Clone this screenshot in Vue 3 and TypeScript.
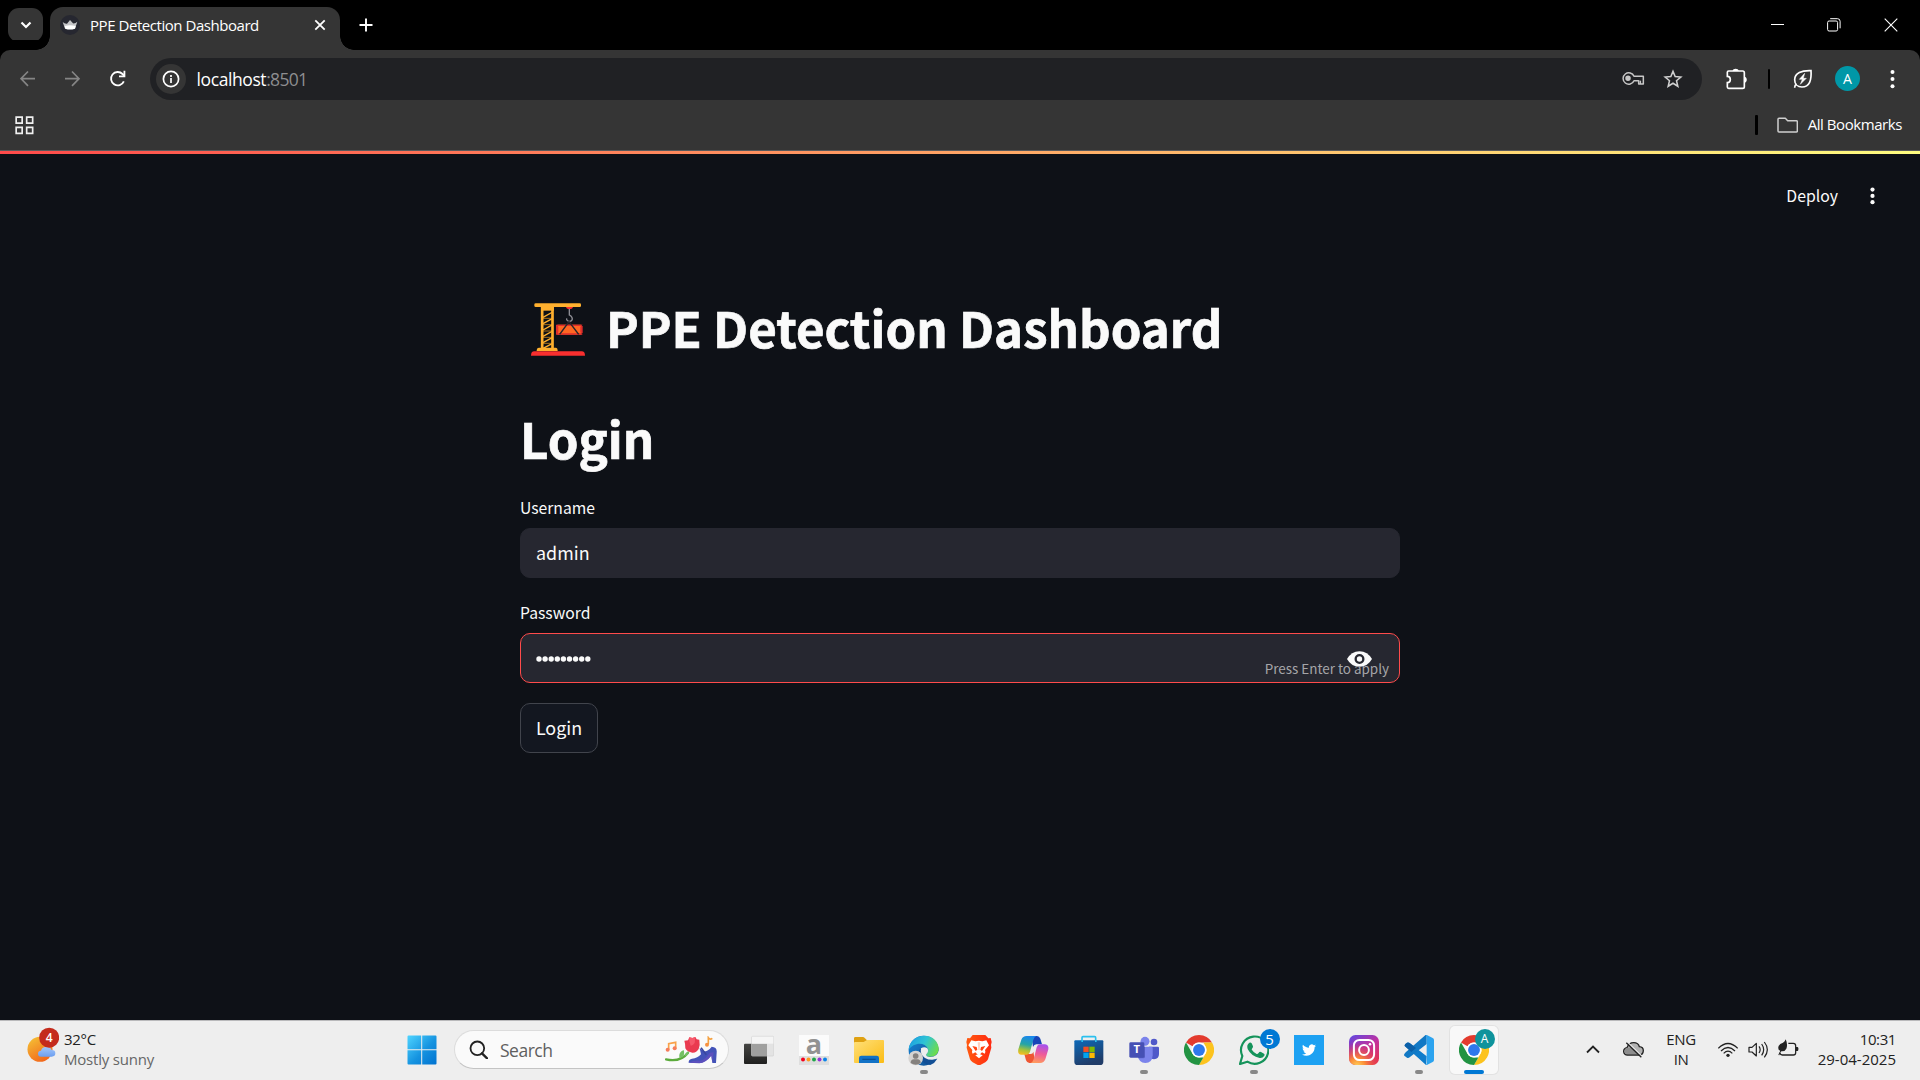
<script setup lang="ts">
interface App { id: string; running?: boolean; active?: boolean }

const apps: App[] = [
  { id: 'taskview' },
  { id: 'amazon' },
  { id: 'files' },
  { id: 'edge', running: true },
  { id: 'brave' },
  { id: 'copilot' },
  { id: 'store' },
  { id: 'teams', running: true },
  { id: 'chrome' },
  { id: 'whatsapp', running: true },
  { id: 'twitter' },
  { id: 'instagram' },
  { id: 'vscode', running: true },
  { id: 'chrome-profile', active: true },
]

const swatches = ['#f5001d', '#ff9a1f', '#1fa54a', '#9333d6', '#0a84e8']
</script>

<template>
  <div class="screen">
    <header class="tabstrip">
      <div class="tab-search">
        <svg width="12" height="8" viewBox="0 0 12 8"><path d="M1.500 1.500 6 6l4.500-4.500" fill="none" stroke="#fff" stroke-width="2.200" /></svg>
      </div>
      <div class="tab">
        <svg class="favicon" width="20" height="20" viewBox="180 45 60 60">
          <circle cx="210" cy="75" r="30" fill="#262730" />
          <path d="M188 66q6 6 13 5l9-11 9 10q7 1 13-5l-5 15q-1 5-4 7-13 3-26 0-3-2-4-7z" fill="#c4c5c8" />
          <path d="M194 78q16-4 33 0l-2 8q-15 3-29 0z" fill="#fff" />
        </svg>
        <span class="tab-title">PPE Detection Dashboard</span>
        <svg class="tab-close" width="12" height="12" viewBox="0 0 12 12"><path d="M1.300 1.300l9.400 9.400M10.700 1.300l-9.400 9.400" stroke="#fff" stroke-width="1.800" /></svg>
      </div>
      <svg class="plus" width="14" height="14" viewBox="0 0 14 14"><path d="M7 .5v13M.5 7h13" stroke="#fff" stroke-width="1.900" /></svg>
      <div class="window-controls">
        <svg width="13" height="14" viewBox="0 0 13 14"><path d="M0 6.500h13" stroke="#fff" stroke-width="1" /></svg>
        <svg width="14" height="14" viewBox="0 0 14 14" fill="none" stroke="#fff"><rect x=".6" y="3" width="10" height="10" rx="1.500" /><path d="M3.200 .7h7.300q2.600 0 2.600 2.600v7" /></svg>
        <svg width="14" height="14" viewBox="0 0 14 14"><path d="M.7 .7l12.600 12.600M13.300 .7L.7 13.300" stroke="#fff" stroke-width="1.100" /></svg>
      </div>
    </header>

    <div class="toolbar">
      <svg class="nav" width="65" height="20" viewBox="60 207 195 60" fill="none" stroke="#858585" stroke-width="5">
        <path d="M105 236H64M84 214.500L63 236l21 21.500" />
        <path d="M195 236h41M216 214.500L237 236l-21 21.500" />
      </svg>
      <svg class="reload" width="18" height="18" viewBox="327 209 54 54">
        <path d="M371.500 243a20 20 0 1 1-4-22l6 6" fill="none" stroke="#fff" stroke-width="5.500" />
        <path d="M376 211v20h-19v-5.500h13.500V211z" fill="#fff" />
      </svg>
      <div class="omnibox">
        <div class="site-info">
          <svg width="18" height="18" viewBox="0 0 18 18"><circle cx="9" cy="9" r="7.600" fill="none" stroke="#fff" stroke-width="1.700" /><path d="M9 8v5M9 5v1.900" stroke="#fff" stroke-width="1.700" /></svg>
        </div>
        <span class="url"><span class="host">localhost</span><span class="port">:8501</span></span>
        <svg class="key" width="24" height="15" viewBox="182 217 72 45" fill="none" stroke="#c7c7c7" stroke-width="4.500">
          <path d="M249 233h-28a17 17 0 1 0 0 13h9v0h5v10h14z" stroke-linejoin="round" />
          <circle cx="203" cy="239" r="6" fill="#c7c7c7" />
          <path d="M240 246v10" />
        </svg>
        <svg width="20" height="20" viewBox="307 209 60 60" fill="none" stroke="#d0d0d0" stroke-width="4.600">
          <path d="M337 216l6.500 15.500 17 1.500-13 11 4 16.800-14.500-9-14.500 9 4-16.800-13-11 17-1.500z" />
        </svg>
      </div>
      <svg class="puzzle" width="22" height="22" viewBox="497 203 66 66">
        <path d="M505 212h42q5 0 5 5v42q0 5-5 5h-42q-4 0-4-4v-13c12 0 12-19 0-19v-12q0-4 4-4z" fill="none" stroke="#fff" stroke-width="5" />
        <path d="M517 212c0-9 18-9 18 0zM552 229c10 1 10 17 0 18z" fill="#fff" />
      </svg>
      <i class="divider"></i>
      <svg class="leaf" width="20" height="20" viewBox="698 206 60 60" fill="none" stroke="#fff">
        <path d="M752 211c-28-1-49 6-49 27 0 13 9 22 22 22 23 0 29-21 27-49zM703 262c0-6 1-9 6-12" stroke-width="5" />
        <path d="M733 219l-16 18h9l-6 15 18-18h-9z" fill="#fff" stroke="#fff" stroke-width="1.500" />
      </svg>
      <div class="avatar">A</div>
      <svg class="more" width="5" height="20" viewBox="0 0 5 20" fill="#fff"><circle cx="2.500" cy="3" r="2" /><circle cx="2.500" cy="10" r="2" /><circle cx="2.500" cy="17.300" r="2" /></svg>
    </div>

    <div class="bookmarks">
      <svg class="grid" width="19" height="19" viewBox="46 347 57 57" fill="none" stroke="#f0f0f0" stroke-width="5">
        <path d="M49.500 350.500h18v18h-18zM81 350.500h18v18H81zM49.500 381h18v18h-18zM81 381h18v18H81z" />
      </svg>
      <i class="divider wide"></i>
      <svg class="folder" width="21" height="16" viewBox="651 352 63 48" fill="none" stroke="#cfcfcf" stroke-width="4.500" stroke-linejoin="round"><path d="M654 359q0-3 3-3h19l7 7h26q3 0 3 3v28q0 3-3 3h-52q-3 0-3-3z" /></svg>
      <span class="all">All Bookmarks</span>
    </div>

    <main class="page">
      <div class="page-edge"></div>
      <div class="decoration"></div>
      <div class="app-bar">
        <span class="deploy">Deploy</span>
        <svg width="5" height="18" viewBox="0 0 5 18" fill="#fafafa"><circle cx="2.500" cy="2.600" r="2.100" /><circle cx="2.500" cy="8.900" r="2.100" /><circle cx="2.500" cy="15.200" r="2.100" /></svg>
      </div>
      <div class="content">
        <h1 class="title">
          <svg width="54" height="53" viewBox="33 40 162 159">
            <path d="M98 67L69 83M98 86L69 102M98 105L69 121M98 124L69 140M98 143L69 159M98 161L69 176" stroke="#ffb02e" stroke-width="4" />
            <path d="M67 86h30M67 105h30M67 124h30M67 143h30M67 161h30" stroke="#c98519" stroke-width="2.500" />
            <path d="M66.500 52v126M97.500 52v126" stroke="#ffb02e" stroke-width="8" />
            <path d="M63 50h39v13H63z" fill="#ffb02e" />
            <rect x="43" y="41" width="140" height="11" rx="4" fill="#ffb02e" />
            <path d="M50 184q0-10 7-10h50q6 0 6 10z" fill="#ffb02e" />
            <path d="M33 198q0-13 10-13h142q10 0 10 13z" fill="#f92f2f" />
            <path d="M138 52h21q-1 5-6 6h-9q-5-1-6-6z" fill="#f92f2f" />
            <path d="M148 58v18q9 4 9 12-1 7-9 7-9-1-8-9" fill="none" stroke="#8d8d94" stroke-width="4" />
            <path d="M112 105h72v30h-72z" fill="#ff6723" />
            <path d="M108 105h80v4h-80zM108 131h80v4h-80zM108 105l7 6v17l-7 7zM188 105l-7 6v17l7 7z" fill="#e02c2c" />
            <path d="M119 134l28-38 29 38" fill="none" stroke="#26262c" stroke-width="4.500" />
          </svg>
          <span>PPE Detection Dashboard</span>
        </h1>
        <h1 class="heading"><span>Login</span></h1>
        <label class="label"><span>Username</span></label>
        <div class="field"><span>admin</span></div>
        <label class="label second"><span>Password</span></label>
        <div class="field focused">
          <svg class="mask" width="56" height="6" viewBox="0 0 56 6" fill="#fafafa"><circle v-for="n in 9" :key="n" :cx="n * 6.1 - 3.1" cy="3" r="2.700" /></svg>
          <svg class="eye" width="25" height="16" viewBox="381 422 75 48">
            <path d="M381 446q13-23 37.500-23.500Q443 423 456 446q-13 23-37.500 23.500Q394 469 381 446z" fill="#fafafa" />
            <circle cx="418.500" cy="446" r="11.500" fill="none" stroke="#262730" stroke-width="7" />
          </svg>
          <span class="hint">Press Enter to apply</span>
        </div>
        <button class="login"><span>Login</span></button>
      </div>
    </main>

    <footer class="taskbar">
      <div class="weather">
        <svg width="32" height="36" viewBox="80 36 96 108">
          <defs>
            <linearGradient id="sun" x1="0" y1="0" x2=".6" y2="1"><stop offset="0" stop-color="#f5c636" /><stop offset="1" stop-color="#f2681c" /></linearGradient>
            <linearGradient id="cloud" x1="0" y1="0" x2="0" y2="1"><stop offset="0" stop-color="#a4c8fb" /><stop offset="1" stop-color="#6d9ff0" /></linearGradient>
          </defs>
          <circle cx="119" cy="103" r="37.500" fill="url(#sun)" />
          <path d="M122 125a9 9 0 0 1 0-18q2-11 15-12 13-1 17 10 11 0 11 10t-11 10z" fill="url(#cloud)" />
          <circle cx="146.500" cy="68" r="30" fill="#c42b1c" />
          <text x="146.500" y="80" class="badge-text" text-anchor="middle" font-size="36">4</text>
        </svg>
        <div class="lines"><span class="temp">32°C</span><span class="cond">Mostly sunny</span></div>
      </div>

      <svg class="start" width="30" height="30" viewBox="0 0 30 30">
        <defs><linearGradient id="win" x1="0" y1="0" x2="1" y2="1"><stop offset="0" stop-color="#4fd4ff" /><stop offset=".55" stop-color="#1593e0" /><stop offset="1" stop-color="#0072d0" /></linearGradient></defs>
        <path d="M1.500 .5H14.200V14.200H.5V1.500q0-1 1-1zM15.200 .5H28.500q1 0 1 1V14.200H15.200zM.5 15.200H14.200V29.500H1.500q-1 0-1-1zM15.200 15.200H29.500V28.500q0 1-1 1H15.200z" fill="url(#win)" />
      </svg>

      <div class="search">
        <svg class="magnifier" width="19" height="19" viewBox="235 76 57 57" fill="none" stroke="#222"><circle cx="260" cy="101" r="20.500" stroke-width="5.500" /><path d="M274 116l15 15" stroke-width="7" stroke-linecap="round" /></svg>
        <span>Search</span>
        <svg class="art" width="52" height="28" viewBox="823 63 156 84">
          <path d="M834 104V86l21-4v18" fill="none" stroke="#f9a24a" stroke-width="5" />
          <circle cx="831" cy="104" r="6" fill="#f57d5c" /><circle cx="852" cy="100" r="6" fill="#f57d5c" />
          <path d="M953 88V68q5 7 12 2" fill="none" stroke="#f5a141" stroke-width="5" /><circle cx="949" cy="89" r="6" fill="#f79140" />
          <path d="M826 133q43 10 66-20" fill="none" stroke="#5cab3c" stroke-width="7" stroke-linecap="round" />
          <path d="M866 128q-3-17 13-23 4 13-3 22zM882 124q1-12 14-15-2 13-14 15z" fill="#74c063" />
          <path d="M881 77l11-1 4-9 9 2 9-3 4 7 8 1q3 16-2 28-7 12-19 11-15-2-21-13 0-14-3-23z" fill="#ea3a50" />
          <path d="M896 67l9 2 9-3-2 18q-5 8-12 8-6-12-4-25z" fill="#f6586b" />
          <path d="M894 143q-1-9 10-12 17-1 27-13l-4-18 12 9q14 0 24-14 17 1 15 18l-2 31h-11l-3-23q-16 21-36 23z" fill="#4353b8" />
          <path d="M894 143q16-8 34-6 16-2 29-24l12-1-4 32-3-22q-16 21-36 23z" fill="#5c50bd" />
          <path d="M931 98l16 21" stroke="#39479f" stroke-width="5" />
        </svg>
      </div>

      <nav class="apps">
        <div v-for="app in apps" :key="app.id" class="slot" :class="{ active: app.active }">
          <svg v-if="app.id === 'taskview'" width="30" height="30" viewBox="42 60 90 90">
            <defs><linearGradient id="tv" x1="0" y1="0" x2="0" y2="1"><stop offset="0" stop-color="#454543" /><stop offset="1" stop-color="#20201f" /></linearGradient></defs>
            <rect x="42" y="86" width="69" height="61" rx="3" fill="url(#tv)" /><rect x="65" y="64" width="66" height="59" rx="3" fill="#e3e3e3" stroke="#d2d2d2" stroke-width="2" /><path d="M65 86h46v37H65z" fill="#a0a09f" /><path d="M66 65h64v21H66z" fill="#f5f5f5" />
          </svg>
          <svg v-else-if="app.id === 'amazon'" width="30" height="30" viewBox="0 0 30 30">
            <path d="M0 0h30v21H0z" fill="#fbfbfb" /><path d="M0 21h30v9H0z" fill="#dedede" />
            <text x="14.800" y="19" class="amazon" text-anchor="middle">a</text>
            <circle v-for="(c, i) in swatches" :key="c" :cx="4 + i * 5.500" cy="24.500" r="2" :fill="c" />
          </svg>
          <svg v-else-if="app.id === 'files'" width="30" height="30" viewBox="372 60 90 90">
            <defs><linearGradient id="fd" x1="0" y1="0" x2="1" y2="1"><stop offset="0" stop-color="#ffe07a" /><stop offset="1" stop-color="#fbbc14" /></linearGradient></defs>
            <path d="M372 70q0-4 4-4h22q4 0 7 4l6 6h48v30h-87z" fill="#dfa112" /><path d="M372 84q0-3 3-3h26l10-6h48q3 0 3 3v63q0 3-3 3h-84q-3 0-3-3z" fill="url(#fd)" />
            <path d="M387 144v-15q0-7 7-7h46q7 0 7 7v15z" fill="#1272c6" /><path d="M397 133h40" stroke="#0a4d91" stroke-width="3.500" />
          </svg>
          <svg v-else-if="app.id === 'edge'" width="31" height="31" viewBox="535 58 93 93">
            <defs>
              <linearGradient id="ea" x1="0" y1=".2" x2="1" y2=".6"><stop offset="0" stop-color="#1c9ee2" /><stop offset=".5" stop-color="#2fc4d4" /><stop offset="1" stop-color="#6ddc4b" /></linearGradient>
              <linearGradient id="eb" x1="0" y1="0" x2="1" y2="1"><stop offset="0" stop-color="#1687d9" /><stop offset="1" stop-color="#114a8b" /></linearGradient>
            </defs>
            <circle cx="582" cy="105" r="45" fill="url(#eb)" />
            <path d="M537 103c2-28 24-43 46-43 28 0 45 20 44 41-1 17-16 24-28 22-7-1-11-3-9-7 2-4 7-7 5-16-9-22-44-20-58 3z" fill="url(#ea)" />
            <path d="M628 104q-6 22-29 20-12-2-9-8 9-9 3-18-9-6-19 0-10 15 3 29 15 13 42 3l10-6z" fill="#eeeeee" />
            <path d="M574 97q-13 12-4 30 10 19 32 21 14-6 21-19-20 8-37-2-16-11-12-30z" fill="#124f95" />
            <circle cx="558" cy="127" r="22" fill="#d5d3d1" /><circle cx="558" cy="121" r="8.500" fill="#85817e" /><path d="M543 142q0-11 10-11h10q10 0 10 11-15 11-30 0z" fill="#85817e" />
          </svg>
          <svg v-else-if="app.id === 'brave'" width="30" height="30" viewBox="702 60 90 90">
            <defs><linearGradient id="br"><stop offset="0" stop-color="#ff5a10" /><stop offset="1" stop-color="#ff2a12" /></linearGradient></defs>
            <path d="M728 60h38l9 10 7-1 3 12-2 9 1 8-10 35q-2 5-8 9l-19 10-19-10q-6-4-8-9l-10-35 1-8-2-9 3-12 8 1z" fill="url(#br)" />
            <path d="M724 76l12 3q10-3 21 0l12-3 8 15-12 14q3 6-1 11l-8-4-5 5-5 2-5-2-5-5-8 4q-4-5-1-11l-12-14z" fill="#fff" />
            <path d="M727 93l13 3 2 8-5 4zM766 93l-13 3-2 8 5 4z" fill="#ff4313" /><path d="M736 121l11-5 11 5-11 9z" fill="#fff" />
            <path d="M743 82h8l-2 23h-4z" fill="#ffd0c0" />
          </svg>
          <svg v-else-if="app.id === 'copilot'" width="31" height="30" viewBox="56 60 93 90">
            <defs>
              <linearGradient id="ca" x1=".5" y1="0" x2=".3" y2="1"><stop offset="0" stop-color="#1a87ec" /><stop offset=".45" stop-color="#25a5a5" /><stop offset=".75" stop-color="#a5c23a" /><stop offset="1" stop-color="#f5bd22" /></linearGradient>
              <linearGradient id="cb" x1=".6" y1="0" x2=".4" y2="1"><stop offset="0" stop-color="#a650ee" /><stop offset=".5" stop-color="#ee5a9a" /><stop offset="1" stop-color="#ff9a5e" /></linearGradient>
            </defs>
            <path d="M96 63h17q7 0 10 8l5 17h-17q-7 0-10 8z" fill="#1745b8" />
            <path d="M108 144H90q-7 0-10-8l-5-19h19q7 0 8-7z" fill="#ee5633" />
            <path d="M82 63h29q-6 2-9 11l-10 36q-3 9-11 9H66q-12-1-9-16l9-29q4-11 16-11z" fill="url(#ca)" />
            <path d="M122 144H94q6-2 9-11l9-36q3-9 10-9h15q12 1 10 15l-9 30q-4 11-16 11z" fill="url(#cb)" />
          </svg>
          <svg v-else-if="app.id === 'store'" width="30" height="30" viewBox="221 60 90 90">
            <defs><linearGradient id="st" x1="0" y1="0" x2=".4" y2="1"><stop offset="0" stop-color="#0d69b8" /><stop offset="1" stop-color="#203c68" /></linearGradient></defs>
            <path d="M245 82V68q0-3 3-3h35q3 0 3 3v14" fill="none" stroke="#2bc0ee" stroke-width="5" />
            <path d="M222 79q0-3 3-3h81q3 0 3 3v61q0 10-10 10h-67q-10 0-10-10z" fill="url(#st)" /><path d="M243 75h5v6h-5zM284 75h5v6h-5z" fill="#2bc0ee" />
            <path d="M249 95h16v16h-16z" fill="#f25022" /><path d="M267 95h16v16h-16z" fill="#80ba01" /><path d="M249 113h16v16h-16z" fill="#02a4ef" /><path d="M267 113h16v16h-16z" fill="#ffb902" />
          </svg>
          <svg v-else-if="app.id === 'teams'" width="30" height="30" viewBox="386 60 90 90">
            <circle cx="461" cy="81" r="10" fill="#5059c9" /><path d="M446 95h26q4 0 4 4v18q0 15-15 16-10 0-15-7z" fill="#5059c9" />
            <circle cx="434" cy="79" r="13.500" fill="#7b83eb" /><path d="M414 95h39q4 0 4 4v22q-1 23-22 23-20-1-22-21z" fill="#7b83eb" />
            <path d="M413 95h21v30q0 5-5 5h-15z" fill="#5c63c8" /><rect x="387" y="82" width="45" height="46" rx="4" fill="#4650b4" />
            <text x="409.500" y="115" class="badge-text teams" text-anchor="middle">T</text>
          </svg>
          <svg v-else-if="app.id === 'chrome' || app.id === 'chrome-profile'" width="30" height="30" viewBox="0 0 48 48">
            <path d="M24 0A24 24 0 0 1 44.800 12H24a12 12 0 0 0-10.400 6L3.200 12A24 24 0 0 1 24 0z" fill="#e33b2e" />
            <path d="M44.800 12A24 24 0 0 1 24 48l10.400-18A12 12 0 0 0 34.400 18L31 12z" fill="#fcc31e" />
            <path d="M24 48A24 24 0 0 1 3.200 12L13.600 30A12 12 0 0 0 24 36h7z" fill="#229342" />
            <circle cx="24" cy="24" r="12" fill="#fff" /><circle cx="24" cy="24" r="9.500" fill="#2e78ec" />
          </svg>
          <svg v-else-if="app.id === 'whatsapp'" width="30" height="30" viewBox="717 60 90 90">
            <path d="M720 147l7-24a41 41 0 1 1 15 17z" fill="none" stroke="#15935a" stroke-width="6.500" stroke-linejoin="round" />
            <path d="M748 83q4-2 7 2l4 9q1 3-3 7-2 2 0 4 5 8 14 12 3 1 5-2l3-4q2-2 5 0l9 5q3 1 1 6-5 8-14 7-25-5-36-27-4-13 5-19z" fill="#15935a" />
          </svg>
          <svg v-else-if="app.id === 'twitter'" width="30" height="30" viewBox="0 0 30 30">
            <path d="M0 0h30v30H0z" fill="#1da1f2" />
            <path transform="translate(8 8) scale(.585)" fill="#fff" d="M23.953 4.570a10 10 0 01-2.825.775 4.958 4.958 0 002.163-2.723c-.951.555-2.005.959-3.127 1.184a4.920 4.920 0 00-8.384 4.482C7.690 8.095 4.067 6.130 1.640 3.162a4.822 4.822 0 00-.666 2.475c0 1.710.870 3.213 2.188 4.096a4.904 4.904 0 01-2.228-.616v.060a4.923 4.923 0 003.946 4.827 4.996 4.996 0 01-2.212.085 4.936 4.936 0 004.604 3.417 9.867 9.867 0 01-6.102 2.105c-.390 0-.779-.023-1.170-.067a13.995 13.995 0 007.557 2.209c9.053 0 13.998-7.496 13.998-13.985 0-.210 0-.420-.015-.630A9.935 9.935 0 0024 4.590z" />
          </svg>
          <svg v-else-if="app.id === 'instagram'" width="30" height="30" viewBox="0 0 30 30">
            <defs>
              <linearGradient id="ia" x1=".2" y1="0" x2=".8" y2="1"><stop offset="0" stop-color="#6b45d8" /><stop offset=".45" stop-color="#c1309f" /><stop offset="1" stop-color="#e5334f" /></linearGradient>
              <radialGradient id="ib" cx=".27" cy="1.050" r=".8"><stop offset="0" stop-color="#ffd55a" /><stop offset=".35" stop-color="#fb8b36" /><stop offset="1" stop-color="#e0344f" stop-opacity="0" /></radialGradient>
            </defs>
            <rect width="30" height="30" rx="6.500" fill="url(#ia)" /><rect width="30" height="30" rx="6.500" fill="url(#ib)" />
            <rect x="4.900" y="4.900" width="20.200" height="20.200" rx="5.500" fill="none" stroke="#fff" stroke-width="2" /><circle cx="15" cy="15" r="4.900" fill="none" stroke="#fff" stroke-width="2" /><circle cx="21" cy="9.200" r="1.300" fill="#fff" />
          </svg>
          <svg v-else-if="app.id === 'vscode'" width="30" height="30" viewBox="402 60 90 90">
            <path d="M468 150l-60-54q-6-5-1-9l4-4q4-2 8 1l51 40z" fill="#0f7ccb" />
            <path d="M402 119q2-4 6-8l56-49q3-3 6-2v27l-51 40q-4 3-8 1l-6-4q-3-2-3-5z" fill="#1178c4" />
            <path d="M403 92q1-6 8-9 4-2 8 1l19 15-14 12z" fill="#0a5fa8" />
            <path d="M467 60q2-1 5 1l16 8q4 2 4 6v60q0 4-4 6l-16 8q-3 2-5 1 3-2 3-6V66q0-4-3-6z" fill="#2ba3ef" />
          </svg>
          <i v-if="app.running" class="running"></i>
          <i v-if="app.active" class="current"></i>
          <span v-if="app.id === 'whatsapp'" class="badge">5</span>
          <span v-if="app.active" class="badge profile">A</span>
        </div>
      </nav>

      <div class="tray">
        <svg class="chev" width="14" height="9" viewBox="0 0 14 9"><path d="M1 7.500l6-6 6 6" fill="none" stroke="#222" stroke-width="1.800" /></svg>
        <svg class="cloud" width="21" height="17" viewBox="187 79 63 51">
          <path d="M201 121a11 11 0 0 1-2-22q6-15 20-15t17 12q12 1 12 12-1 13-12 13z" fill="#b2b2b2" stroke="#222" stroke-width="4" /><path d="M201 99q18-4 34 20h-34q-10-2-10-10t10-10z" fill="#8d8d8d" />
          <path d="M199 81l47 46" stroke="#eee" stroke-width="4" /><path d="M197 84l45 44" stroke="#222" stroke-width="4" />
        </svg>
        <div class="lines center"><span>ENG</span><span>IN</span></div>
        <svg class="wifi" width="20" height="16" viewBox="474 80 60 48" fill="none" stroke="#222" stroke-width="3.600"><path d="M475 99q29-29 58 0M483 107q21-21 42 0M491 114q13-13 26 0" /><circle cx="504" cy="120" r="5" fill="#222" stroke="none" /></svg>
        <svg class="speaker" width="21" height="17" viewBox="563 79 63 51" fill="none" stroke="#222" stroke-width="3.600" stroke-linejoin="round"><path d="M566 98h9l13-12v38l-13-12h-9z" /><path d="M596 95q7 10 0 20M604 88q12 17 0 34M612 82q18 23 0 46" /></svg>
        <svg class="battery" width="21" height="18" viewBox="653 74 63 54"><path d="M684 87h15q7 0 7 7v21q0 7-7 7h-33q-6 0-7-6" fill="none" stroke="#222" stroke-width="3.800" /><path d="M707 98h4q3 0 3 4v4q0 4-3 4h-4z" fill="#222" /><path d="M654 122q3-9 6-12-9-4-5-15 3-7 13-10 6-3 8-10 7 15 2 28-4 9-15 8-4 5-6 12z" fill="#222" /></svg>
        <div class="lines right"><span class="clock">10:31</span><span>29-04-2025</span></div>
      </div>
    </footer>
  </div>
</template>

<style>
body { background: #0e1117; overflow: hidden; }
</style>

<style scoped>
.screen { width: 1920px; height: 1080px; display: flex; flex-direction: column; overflow: hidden; background: #353535; font-family: "Open Sans", "Noto Sans", sans-serif; box-sizing: border-box; }
svg { display: block; flex: none; }
span { white-space: nowrap; flex: none; }
.tabstrip { height: 50px; background: #000; display: flex; flex: none; align-items: flex-start; }
.tab-search { width: 35px; height: 34px; margin: 8px 7px 0 8px; border-radius: 11px; background: #353535; display: flex; align-items: center; justify-content: center; }
.tab { position: relative; width: 290px; height: 43px; margin-top: 7px; box-sizing: border-box; padding: 0 14px 7px 10px; border-radius: 13px 13px 0 0; background: #353535; display: flex; align-items: center; }
.tab::before, .tab::after { content: ""; position: absolute; bottom: 0; width: 14px; height: 14px; }
.tab::before { left: -14px; background: radial-gradient(circle at 0 0, transparent 13.500px, #353535 14px); }
.tab::after { right: -14px; background: radial-gradient(circle at 100% 0, transparent 13.500px, #353535 14px); }
.tab-title { margin-left: 10px; font-size: 15px; line-height: 20px; letter-spacing: -.45px; color: #fff; }
.tab-close { margin-left: auto; }
.plus { margin: 18px 0 0 18.500px; }
.window-controls { margin: 18px 22px 0 auto; display: flex; gap: 43px; }
.toolbar { height: 57px; flex: none; display: flex; align-items: center; background: #353535; border-radius: 10px 10px 0 0; box-shadow: 0 -10px 0 #000; }
.nav { margin-left: 20px; }
.reload { margin-left: 24px; }
.omnibox { width: 1552px; height: 42px; margin-left: 23px; border-radius: 21px; background: #202124; display: flex; align-items: center; box-sizing: border-box; padding: 0 19.500px 0 6px; }
.site-info { width: 30px; height: 30px; border-radius: 50%; background: #353535; display: flex; align-items: center; justify-content: center; }
.url { margin-left: 10.500px; font-size: 17.500px; line-height: 24px; color: #fff; display: flex; }
.host { letter-spacing: -.4px; }
.port { color: #8d8e90; letter-spacing: -.7px; }
.key { margin: 0 18px 0 auto; }
.puzzle { margin-left: 24px; }
.divider { display: block; width: 2px; height: 20px; background: #000; border-radius: 1px; margin-left: 20px; }
.leaf { margin-left: 22.500px; }
.avatar { width: 25px; height: 25px; margin-left: 22.500px; border-radius: 50%; background: #0097a7; color: #fff; font-size: 14px; line-height: 25px; text-align: center; }
.more { margin-left: 30px; }
.bookmarks { height: 43px; flex: none; display: flex; align-items: center; padding: 0 18px 9px 15px; box-sizing: border-box; background: #353535; }
.grid { margin-top: 2px; }
.folder { margin-top: 2px; }
.divider.wide { width: 3px; margin: 2px 19px 0 auto; }
.all { margin-left: 10px; font-size: 15px; line-height: 20px; letter-spacing: -.43px; color: #fff; }
.page { height: 870px; flex: none; background: #0e1117; color: #fafafa; font-family: "Noto Sans CJK SC", "Noto Sans CJK JP", sans-serif; }
.page-edge { height: 1px; background: #5a5a5c; }
.decoration { height: 3px; background: linear-gradient(90deg, #ff4b4b, #fffd80); }
.app-bar { height: 84px; display: flex; align-items: center; justify-content: flex-end; padding-right: 45px; gap: 32px; }
.deploy { font-size: 15.800px; line-height: 20px; }
.content { width: 880px; margin: 59px auto 0; }
.title, .heading { margin: 0; font-size: 49.200px; font-weight: 700; line-height: 60px; height: 60px; display: flex; align-items: center; -webkit-text-stroke: .7px #fafafa; }
.title svg { margin: 5px 21px 0 11px; }
.heading { margin-top: 51px; }
.label { display: flex; font-size: 15.700px; line-height: 20px; margin: 30px 0 10px; }
.label.second { margin: 25px 0 10px; }
.field { position: relative; height: 50px; border-radius: 10px; background: #262730; box-sizing: border-box; padding: 0 15px 2px; display: flex; align-items: center; font-size: 17.900px; line-height: 24px; border: 1px solid #262730; }
.focused { border-color: #ff4b4b; }
.mask { margin-top: 4px; }
.eye { position: absolute; left: 826px; top: 17px; }
.hint { position: absolute; right: 10px; top: 24px; font-size: 13.450px; line-height: 20px; color: #a5a5a8; }
.login { display: flex; align-items: center; justify-content: center; width: 78px; height: 50px; margin-top: 20px; padding: 0 0 2px; border: 1px solid #41444c; border-radius: 10px; background: #131720; color: #fafafa; font: inherit; font-size: 17.900px; line-height: 24px; }
.taskbar { height: 60px; flex: none; box-sizing: border-box; background: #eee; border-top: 1px solid #b9b9bb; display: flex; align-items: flex-start; color: #222; }
.weather { width: 380px; display: flex; margin-left: 27px; }
.weather svg { margin-top: 6px; }
.lines { display: flex; flex-direction: column; margin: 8px 0 0 5px; font-size: 15px; line-height: 20px; }
.temp { letter-spacing: -.3px; }
.cond { color: #666; letter-spacing: -.2px; }
.badge-text { fill: #fff; font-family: "Open Sans", sans-serif; font-weight: 600; }
.teams { font-size: 34px; font-weight: 700; }
.amazon { font: 700 27px "Open Sans", sans-serif; fill: #929292; }
.start { margin: 14px 17px 0 0; }
.search { width: 275px; height: 39px; box-sizing: border-box; margin-top: 9px; border: 1px solid #dcdcdc; border-bottom-color: #c4c4c4; border-radius: 20px; background: #fafafa; display: flex; align-items: center; padding: 0 11px 0 14px; font-size: 17.500px; line-height: 24px; letter-spacing: -.5px; color: #5f5f5f; }
.magnifier { margin-right: 12px; }
.art { margin-left: auto; }
.apps { display: flex; margin-left: 2px; }
.slot { position: relative; width: 48px; height: 48px; margin: 5px 3.500px 0; display: flex; align-items: center; justify-content: center; box-sizing: border-box; }
.slot.active { background: #f8f8f8; border-radius: 5px; box-shadow: 0 0 0 1px #e2e2e2; }
.running, .current { position: absolute; bottom: 0; left: 20px; width: 8px; height: 4px; border-radius: 2px; background: #888; }
.current { left: 14px; width: 20px; background: #0078d4; }
.badge { position: absolute; left: 30px; top: 3px; width: 20px; height: 20px; border-radius: 50%; background: #0078d4; color: #fff; font-size: 15px; line-height: 20px; text-align: center; }
.profile { left: 25px; background: #0e939c; font-size: 12px; }
.tray { display: flex; align-items: flex-start; margin-left: auto; padding-right: 24px; }
.chev { margin: 24px 23px 0 0; }
.cloud { margin-top: 20px; }
.lines.center { align-items: center; width: 40px; margin-left: 17px; letter-spacing: -.4px; }
.lines.right { align-items: flex-end; width: 78px; margin-left: 19px; }
.clock { letter-spacing: -.4px; }
.wifi { margin: 21px 10px 0 17px; }
.speaker { margin: 20px 9px 0 0; }
.battery { margin-top: 18px; }
</style>
